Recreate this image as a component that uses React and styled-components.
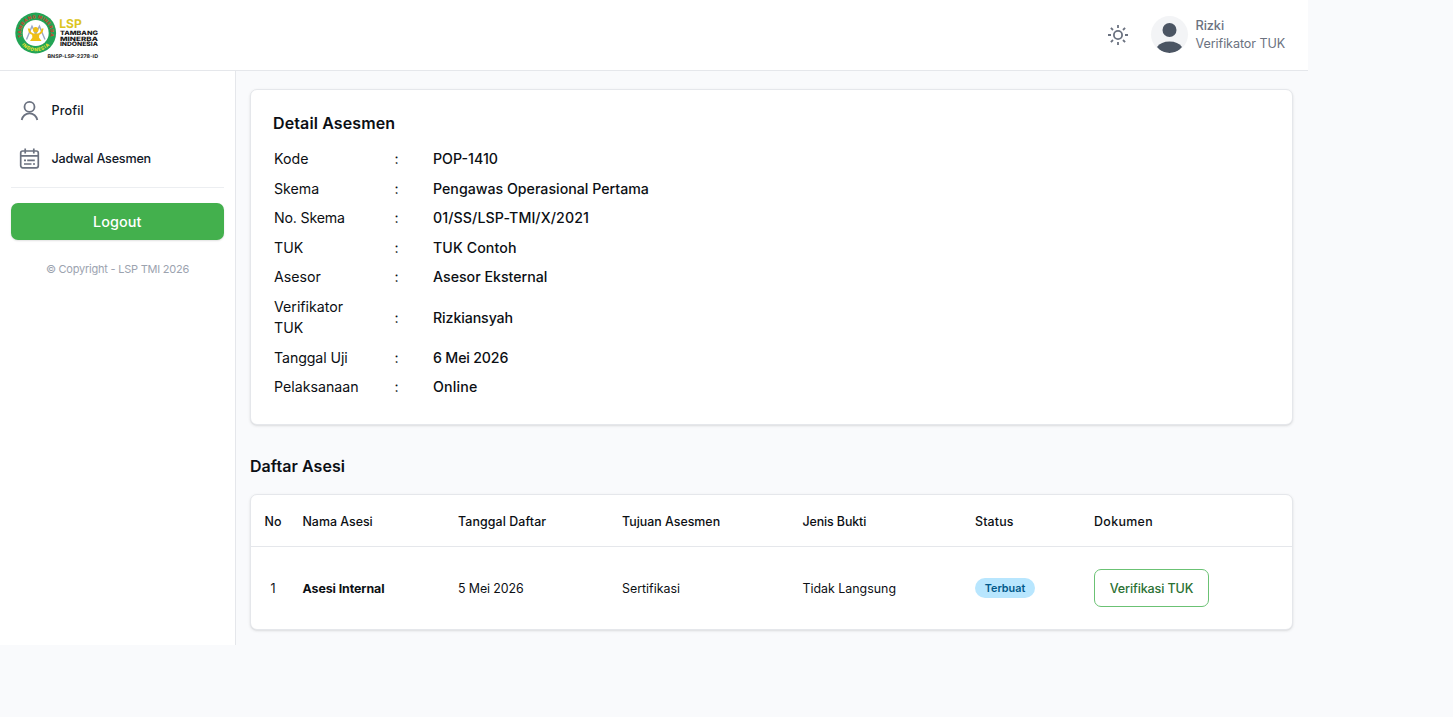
import styled, { createGlobalStyle } from 'styled-components'

const GlobalStyle = createGlobalStyle`
    *, *::before, *::after {
        box-sizing: border-box;
    }
    body {
        margin: 0;
        background-color: #f9fafc;
        color: #0c0f14;
        font-family: Inter, 'Liberation Sans', sans-serif;
    }
`;

const Page = styled.div`
    width: 1308px;
    height: 645px;
    display: flex;
    flex-direction: column;
`;

const Header = styled.header`
    height: 71px;
    flex-shrink: 0;
    padding: 0 22px 0 13px;
    display: flex;
    align-items: center;
    justify-content: space-between;
    background-color: white;
    border-bottom: 1px solid #e5e7eb;
`;

const LogoSvg = styled.svg`
    width: 88px;
    height: 54px;
    margin-top: 2px;
    text-rendering: geometricPrecision;
`;

const HeaderRight = styled.div`
    display: flex;
    align-items: center;
`;

const ThemeButton = styled.button`
    width: 24px;
    height: 24px;
    padding: 0;
    margin-right: 21px;
    border: none;
    background: none;
    cursor: pointer;
`;

const Avatar = styled.div`
    width: 37px;
    height: 37px;
    margin: -1px 7.5px 0 0;
    border-radius: 50%;
    overflow: hidden;
    background-color: #f3f4f6;
`;

const UserInfo = styled.div`
    width: 90.5px;
    color: #6b7280;
    white-space: nowrap;
`;

const UserName = styled.div`
    font-size: 12.8px;
    font-weight: 500;
    line-height: 18px;
    letter-spacing: -0.1px;
`;

const UserRole = styled.div`
    font-size: 12.6px;
    line-height: 18px;
    letter-spacing: -0.08px;
`;

const Body = styled.div`
    flex: 1;
    display: flex;
`;

const Sidebar = styled.aside`
    width: 236px;
    flex-shrink: 0;
    padding: 15px 11px 0;
    background-color: white;
    border-right: 1px solid #e5e7eb;
`;

const Nav = styled.nav`
    padding-bottom: 5px;
    border-bottom: 1px solid #eceef1;
`;

const NavItem = styled.a`
    height: 48px;
    padding-left: 8px;
    display: flex;
    align-items: center;
    gap: 11.5px;
    color: #111827;
    font-size: 12.6px;
    font-weight: 500;
    letter-spacing: ${props => props.$spacing || '0'};
    cursor: pointer;
`;

const LogoutButton = styled.button`
    width: 212.5px;
    height: 37px;
    margin-top: 15px;
    border: none;
    border-radius: 7px;
    background-color: #43b04d;
    box-shadow: 0 1px 2px rgba(0, 0, 0, 0.12);
    color: white;
    font-family: inherit;
    font-size: 14.4px;
    font-weight: 500;
    letter-spacing: 0.1px;
    cursor: pointer;
`;

const Copyright = styled.p`
    margin: 21px 0 0;
    color: #9ca3af;
    font-size: 11px;
    line-height: 16px;
    letter-spacing: -0.23px;
    text-align: center;
`;

const Main = styled.main`
    flex: 1;
    padding: 18px 15px 0 14px;
`;

const Card = styled.section`
    background-color: white;
    border: 1px solid #e5e7eb;
    border-radius: 7px;
    box-shadow: 0 1px 3px rgba(0, 0, 0, 0.1), 0 1px 2px -1px rgba(0, 0, 0, 0.1);
`;

const DetailCard = styled(Card)`
    height: 335.5px;
    padding: 20px 22px;
`;

const Title = styled.h2`
    margin: 0;
    font-size: 16px;
    font-weight: 600;
    line-height: 26px;
    letter-spacing: ${props => props.$spacing || '0'};
`;

const DetailList = styled.dl`
    margin: 8.5px 0 0 1px;
    font-size: 14.2px;
    line-height: 21.6px;
`;

const DetailRow = styled.div`
    padding: 3.95px 0;
    display: grid;
    grid-template-columns: 120.5px 38.5px 1fr;
    align-items: center;
`;

const DetailLabel = styled.dt`
    width: 90px;
    letter-spacing: ${props => props.$spacing || '0'};
`;

const DetailValue = styled.dd`
    margin: 0;
    font-weight: 500;
    letter-spacing: ${props => props.$spacing || '0'};
`;

const ListHeading = styled.div`
    margin: 28.5px 0 15px;
`;

const TableCard = styled(Card)`
    height: 136px;
    overflow: hidden;
`;

const Row = styled.div`
    height: ${props => props.$head ? '52px' : '82px'};
    padding-top: ${props => props.$head && '1px'};
    display: grid;
    grid-template-columns: 51.5px 155.5px 164px 180.5px 172.5px 119px 1fr;
    align-items: center;
    border-bottom: ${props => props.$head && '1px solid #e5e7eb'};
    font-size: 12.4px;
    font-weight: ${props => props.$head ? 500 : 400};
    white-space: nowrap;
`;

const Cell = styled.div`
    padding-right: ${props => props.$center && '7.5px'};
    text-align: ${props => props.$center && 'center'};
    font-weight: ${props => props.$bold && 700};
    letter-spacing: ${props => props.$spacing || '0'};
`;

const Badge = styled.span`
    width: 60px;
    height: 20px;
    display: flex;
    align-items: center;
    justify-content: center;
    border-radius: 10px;
    background-color: #b8e6fe;
    color: #00598a;
    font-size: 10.8px;
    font-weight: 600;
`;

const VerifyButton = styled.button`
    width: 115px;
    height: 38px;
    padding: 0;
    border: 1px solid #6bc274;
    border-radius: 7px;
    background-color: white;
    color: #2b7133;
    font-family: inherit;
    font-size: 12.6px;
    font-weight: 500;
    letter-spacing: -0.15px;
    cursor: pointer;
`;

const Logo = () => (
    <LogoSvg viewBox="0 0 88 54">
        <defs>
            <path id="ringTop" d="M 9 29 A 14.6 14.6 0 1 1 36.4 29" />
            <path id="ringBottom" d="M 7.9 34.6 A 18.2 18.2 0 0 0 37.5 34.6" />
        </defs>
        <circle cx="22.7" cy="24" r="20.4" fill="#23a455" />
        <circle cx="22.7" cy="24" r="13" fill="white" />
        <text fontSize="4.6" fontWeight="800" fill="#c8472f">
            <textPath href="#ringTop" startOffset="1" textLength="53">TAMBANG MINERBA</textPath>
        </text>
        <text fontSize="4.6" fontWeight="800" fill="#e9e32f">
            <textPath href="#ringBottom" startOffset="1.5" textLength="31">INDONESIA</textPath>
        </text>
        <path d="M13.5 30.5L19 17.2L22.7 25L26.4 17.2L32 30.5" fill="none" stroke="#9ba8c5" strokeWidth="1.4" />
        <circle cx="22.7" cy="20.8" r="2.7" fill="#f0bf16" />
        <path d="M15.8 19.5Q16.5 25.600 22.700 25.600Q28.900 25.600 29.600 19.500" fill="none" stroke="#f0bf16" strokeWidth="2" />
        <path d="M19 25H26.400L26 28.500L28.500 32H17L19.400 28.500Z" fill="#f0bf16" />
        <text x="46.3" y="19" fontSize="12.2" fontWeight="700" fill="#dcc51e" textLength="22.5" lengthAdjust="spacingAndGlyphs">LSP</text>
        <g fontSize="6" fontWeight="800" fill="#171717">
            <text x="46.9" y="25.7" textLength="38" lengthAdjust="spacingAndGlyphs">TAMBANG</text>
            <text x="46.9" y="31.5" textLength="38" lengthAdjust="spacingAndGlyphs">MINERBA</text>
            <text x="46.9" y="37.3" textLength="38" lengthAdjust="spacingAndGlyphs">INDONESIA</text>
        </g>
        <text x="34.5" y="48.7" fontSize="5" fontWeight="700" fill="#222" textLength="50.5" lengthAdjust="spacingAndGlyphs">BNSP-LSP-2278-ID</text>
    </LogoSvg>
)

const SunIcon = () => (
    <svg width="24" height="24" viewBox="0 0 24 24" fill="none" stroke="#6b7280" strokeWidth="1.8">
        <circle cx="12" cy="12" r="4.1" />
        <path d="M12 2v3M12 19v3M2 12h3M19 12h3M4.9 4.9l2.1 2.1M17 17l2.1 2.1M4.9 19.1l2.1-2.1M17 7l2.1-2.1" />
    </svg>
)

const UserIcon = () => (
    <svg width="21" height="21" viewBox="0 0 21 21" fill="none" stroke="#6b7280" strokeWidth="1.8">
        <circle cx="10.5" cy="6.9" r="5" />
        <path d="M2.7 20A7.9 7.9 0 0 1 18.3 20" />
    </svg>
)

const CalendarIcon = () => (
    <svg width="21" height="21" viewBox="0 0 21 21" fill="none" stroke="#6b7280" strokeWidth="1.7">
        <rect x="1.7" y="3" width="17.6" height="16.8" rx="2" />
        <path d="M1.7 7.8h17.6M6.2 .6v4.8M14.8 .6v4.8M5 12.3h2M8.2 12.3h7.6M5 16h7.5M14 16h2" />
    </svg>
)

const AvatarIcon = () => (
    <svg width="37" height="37" viewBox="0 0 37 37" fill="#4b5563">
        <circle cx="18.5" cy="14" r="7" />
        <path d="M6 31Q10 25.5 18.5 25.5Q27 25.5 31 31Q26 37 18.5 37Q11 37 6 31Z" />
    </svg>
)

const details = [
    { label: 'Kode', value: 'POP-1410' },
    { label: 'Skema', value: 'Pengawas Operasional Pertama' },
    { label: 'No. Skema', value: '01/SS/LSP-TMI/X/2021', labelSpacing: '-0.2px', valueSpacing: '0.09px' },
    { label: 'TUK', value: 'TUK Contoh', valueSpacing: '0.1px' },
    { label: 'Asesor', value: 'Asesor Eksternal' },
    { label: 'Verifikator TUK', value: 'Rizkiansyah', valueSpacing: '-0.1px' },
    { label: 'Tanggal Uji', value: '6 Mei 2026', labelSpacing: '-0.1px', valueSpacing: '-0.18px' },
    { label: 'Pelaksanaan', value: 'Online', valueSpacing: '0.2px' },
]

const App = () => {
    return (
        <>
            <GlobalStyle />
            <Page>
                <Header>
                    <Logo />
                    <HeaderRight>
                        <ThemeButton>
                            <SunIcon />
                        </ThemeButton>
                        <Avatar>
                            <AvatarIcon />
                        </Avatar>
                        <UserInfo>
                            <UserName>Rizki</UserName>
                            <UserRole>Verifikator TUK</UserRole>
                        </UserInfo>
                    </HeaderRight>
                </Header>
                <Body>
                    <Sidebar>
                        <Nav>
                            <NavItem $spacing="0.15px">
                                <UserIcon />
                                Profil
                            </NavItem>
                            <NavItem $spacing="-0.2px">
                                <CalendarIcon />
                                Jadwal Asesmen
                            </NavItem>
                        </Nav>
                        <LogoutButton>Logout</LogoutButton>
                        <Copyright>© Copyright - LSP TMI 2026</Copyright>
                    </Sidebar>
                    <Main>
                        <DetailCard>
                            <Title $spacing="0.12px">Detail Asesmen</Title>
                            <DetailList>
                                {details.map(item => (
                                    <DetailRow key={item.label}>
                                        <DetailLabel $spacing={item.labelSpacing}>{item.label}</DetailLabel>
                                        <span>:</span>
                                        <DetailValue $spacing={item.valueSpacing}>{item.value}</DetailValue>
                                    </DetailRow>
                                ))}
                            </DetailList>
                        </DetailCard>
                        <ListHeading>
                            <Title $spacing="0.05px">Daftar Asesi</Title>
                        </ListHeading>
                        <TableCard>
                            <Row $head>
                                <Cell $center>No</Cell>
                                <Cell>Nama Asesi</Cell>
                                <Cell $spacing="0.1px">Tanggal Daftar</Cell>
                                <Cell>Tujuan Asesmen</Cell>
                                <Cell $spacing="-0.1px">Jenis Bukti</Cell>
                                <Cell $spacing="0.15px">Status</Cell>
                                <Cell $spacing="0.35px">Dokumen</Cell>
                            </Row>
                            <Row>
                                <Cell $center>1</Cell>
                                <Cell $bold $spacing="-0.08px">Asesi Internal</Cell>
                                <Cell $spacing="-0.1px">5 Mei 2026</Cell>
                                <Cell>Sertifikasi</Cell>
                                <Cell>Tidak Langsung</Cell>
                                <Cell><Badge>Terbuat</Badge></Cell>
                                <Cell><VerifyButton>Verifikasi TUK</VerifyButton></Cell>
                            </Row>
                        </TableCard>
                    </Main>
                </Body>
            </Page>
        </>
    )
}

export default App
